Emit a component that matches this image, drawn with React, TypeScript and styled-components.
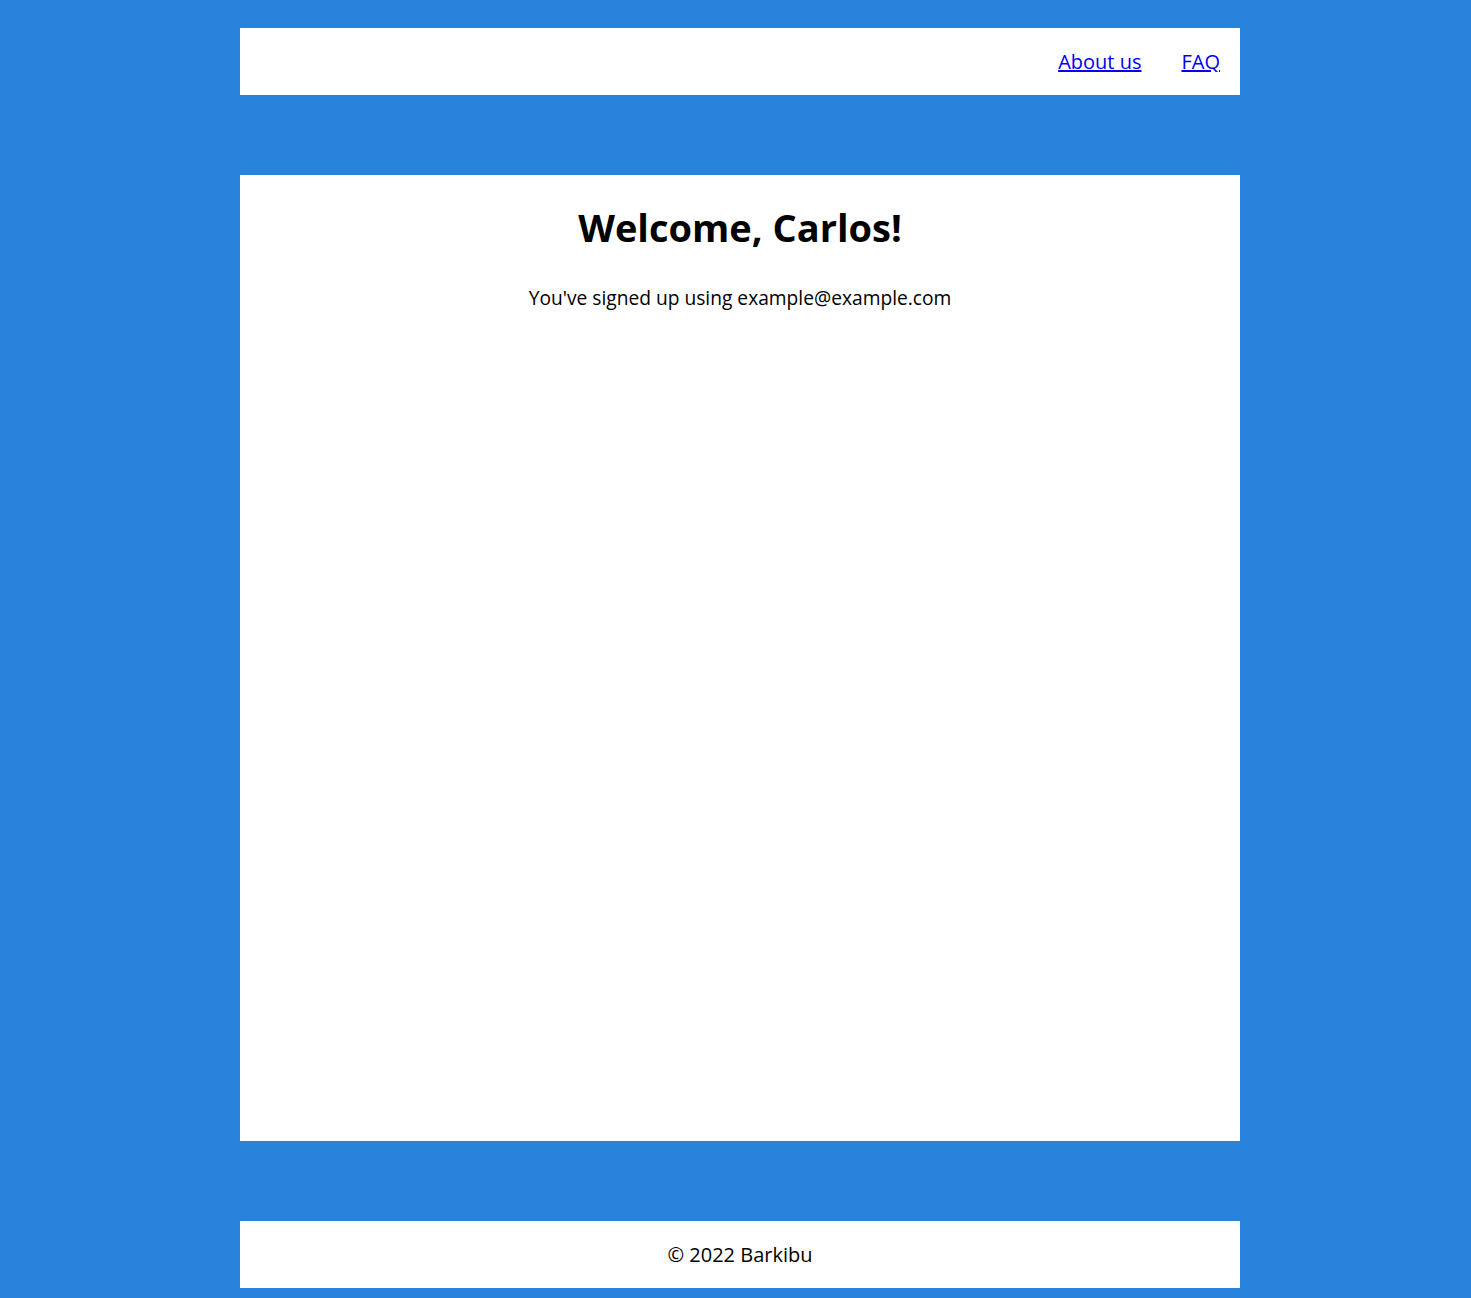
import React from "react";
import styled, { createGlobalStyle } from "styled-components";

const Global = createGlobalStyle`
  html, body { margin: 0; padding: 0; }
  body {
    background: #2783dc;
    font-family: "Open Sans", "Noto Sans", sans-serif;
    color: #000;
  }
`;

const Page = styled.div`
  padding: 28px 0 10px 9px;
  display: flex;
  flex-direction: column;
  align-items: center;
  gap: 80px;
`;

const Panel = styled.div<{ $h: number }>`
  width: 1000px;
  height: ${(p) => p.$h}px;
  background: #fff;
  box-sizing: border-box;
`;

const Header = styled(Panel)`
  display: flex;
  align-items: center;
  justify-content: flex-end;
  gap: 40px;
  padding-right: 20px;
  padding-bottom: 1px;
`;

const NavLink = styled.a`
  color: #0000ee;
  font-size: 20px;
  text-decoration: underline;
`;

const Main = styled(Panel)`
  display: flex;
  flex-direction: column;
  align-items: center;
  padding-top: 30px;
`;

const Title = styled.h1`
  margin: 0;
  font-size: 38px;
  font-weight: 700;
  line-height: 1.2;
`;

const Info = styled.p`
  margin: 33px 0 0;
  font-size: 19.2px;
`;

const Footer = styled(Panel)`
  display: flex;
  align-items: center;
  justify-content: center;
  font-size: 20px;
`;

export default function App() {
  return (
    <>
      <Global />
      <Page>
        <Header $h={67}>
          <NavLink href="#">About us</NavLink>
          <NavLink href="#">FAQ</NavLink>
        </Header>
        <Main $h={966}>
          <Title>Welcome, Carlos!</Title>
          <Info>You've signed up using example@example.com</Info>
        </Main>
        <Footer $h={67}>© 2022 Barkibu</Footer>
      </Page>
    </>
  );
}
